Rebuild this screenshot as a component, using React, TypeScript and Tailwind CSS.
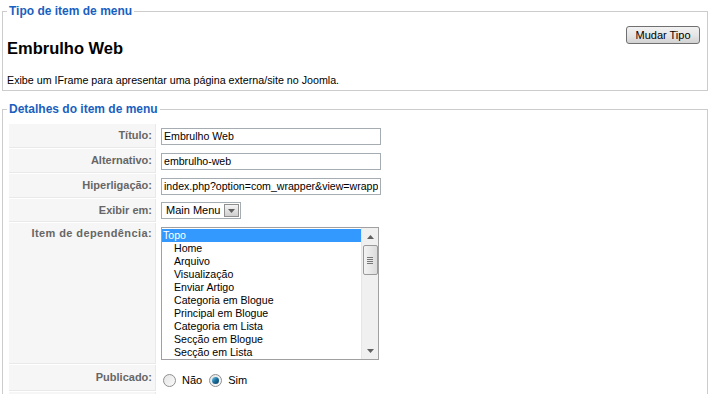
import React from "react"

const parents = [
  "Topo",
  "Home",
  "Arquivo",
  "Visualização",
  "Enviar Artigo",
  "Categoria em Blogue",
  "Principal em Blogue",
  "Categoria em Lista",
  "Secção em Blogue",
  "Secção em Lista",
]

const Label: React.FC<{ text: string; top?: boolean; extra?: string }> = ({ text, top, extra }) => (
  <div
    className={
      "w-[147px] shrink-0 bg-[#f6f6f6] border-b border-r border-[#e9e9e9] pr-[3px] text-right text-[11px] leading-[13px] font-bold text-[#666] flex justify-end " +
      (top ? "items-start pt-[4px] " : "items-center ") +
      (extra || "")
    }
  >
    {text}
  </div>
)

const TextInput: React.FC<{ value: string }> = ({ value }) => (
  <input
    readOnly
    value={value}
    className="w-[220px] h-[17px] border border-[#a5acb2] bg-white px-[2px] text-[10.6px] text-black outline-none"
  />
)

const Radio: React.FC<{ checked?: boolean }> = ({ checked }) => (
  <span className="w-[13px] h-[13px] rounded-full border border-[#8e8f8f] bg-gradient-to-br from-[#e4e4e4] to-[#fbfbfb] flex items-center justify-center">
    {checked && (
      <span className="w-[7px] h-[7px] rounded-full bg-gradient-to-br from-[#6fd0f2] via-[#1b6e9e] to-[#0b3f60]" />
    )}
  </span>
)

const Arrow: React.FC<{ down?: boolean }> = ({ down }) => (
  <svg width="7" height="4" viewBox="0 0 7 4">
    {down ? (
      <path d="M0 0 H7 L3.5 4 Z" fill="#606060" />
    ) : (
      <path d="M0 4 H7 L3.5 0 Z" fill="#606060" />
    )}
  </svg>
)

const ListBox = () => (
  <div className="w-[218px] h-[133px] border border-[#a0a0a0] bg-white flex">
    <div className="flex-1 overflow-hidden pt-[1px]">
      {parents.map((p, i) => (
        <div
          key={p}
          className={
            "h-[13px] text-[10.6px] leading-[13px] whitespace-nowrap " +
            (i === 0 ? "bg-[#3399ff] text-white pl-[1px]" : "text-black pl-[12px]")
          }
        >
          {p}
        </div>
      ))}
    </div>
    <div className="w-[17px] bg-[#f0f0f0] border-l border-[#e6e6e6] flex flex-col items-center">
      <div className="h-[17px] flex items-center justify-center">
        <Arrow />
      </div>
      <div className="w-[15px] h-[30px] rounded-[2px] border border-[#9a9a9a] bg-gradient-to-r from-[#f3f3f3] to-[#dcdcdc] flex flex-col items-center justify-center gap-[1px]">
        <span className="w-[6px] h-[1px] bg-[#777]" />
        <span className="w-[6px] h-[1px] bg-[#777]" />
        <span className="w-[6px] h-[1px] bg-[#777]" />
        <span className="w-[6px] h-[1px] bg-[#777]" />
      </div>
      <div className="flex-1" />
      <div className="h-[17px] flex items-center justify-center">
        <Arrow down />
      </div>
    </div>
  </div>
)

const Select: React.FC<{ text: string; w: string }> = ({ text, w }) => (
  <div className={w + " h-[17px] border border-[#a5acb2] bg-white flex items-center justify-between"}>
    <span className="pl-[4px] text-[11px] text-black whitespace-nowrap">{text}</span>
    <span className="w-[15px] h-[13px] mr-[1px] border border-[#8f8f8f] bg-gradient-to-b from-[#f4f4f4] to-[#cfcfcf] flex items-center justify-center">
      <Arrow down />
    </span>
  </div>
)

export default function App() {
  return (
    <div className="h-[394px] bg-white font-['Liberation_Sans',Arial,Helvetica,sans-serif] text-black overflow-hidden">
      <fieldset className="mt-[4px] ml-[2px] mr-[3px] border border-[#cccccc] px-[4px] pb-[3px]">
        <legend className="px-[2px] text-[12px] leading-[14px] font-bold text-[#1a5fc0]">
          Tipo de item de menu
        </legend>
        <div className="flex justify-between items-start">
          <div>
            <h2 className="mt-[21px] text-[16.5px] leading-[18px] font-bold">Embrulho Web</h2>
            <p className="mt-[17px] text-[10.7px] leading-[13px]">
              Exibe um IFrame para apresentar uma página externa/site no Joomla.
            </p>
          </div>
          <button className="mt-[8px] mr-[3px] w-[74px] h-[18px] rounded-[3px] border border-[#707070] bg-gradient-to-b from-[#f2f2f2] via-[#e6e6e6] to-[#d2d2d2] text-[11px] leading-[14px] text-black">
            Mudar Tipo
          </button>
        </div>
      </fieldset>

      <fieldset className="mt-[11px] ml-[2px] mr-[3px] border border-[#cccccc] px-[4px] pb-[10px]">
        <legend className="px-[2px] text-[12px] leading-[14px] font-bold text-[#1a5fc0]">
          Detalhes do item de menu
        </legend>
        <div className="mt-[8px] ml-[2px] flex flex-col gap-[1px]">
          <div className="flex h-[24px] gap-[1px]">
            <Label text="Título:" />
            <div className="pl-[4px] flex items-center">
              <TextInput value="Embrulho Web" />
            </div>
          </div>
          <div className="flex h-[24px] gap-[1px]">
            <Label text="Alternativo:" />
            <div className="pl-[4px] flex items-center">
              <TextInput value="embrulho-web" />
            </div>
          </div>
          <div className="flex h-[24px] gap-[1px]">
            <Label text="Hiperligação:" />
            <div className="pl-[4px] flex items-center">
              <TextInput value="index.php?option=com_wrapper&view=wrapper" />
            </div>
          </div>
          <div className="flex h-[23px] gap-[1px]">
            <Label text="Exibir em:" />
            <div className="pl-[4px] flex items-center">
              <Select text="Main Menu" w="w-[80px]" />
            </div>
          </div>
          <div className="flex h-[141px] gap-[1px]">
            <Label text="Item de dependência:" top extra="tracking-[0.4px]" />
            <div className="pl-[4px] pt-[4px]">
              <ListBox />
            </div>
          </div>
          <div className="flex h-[26px] gap-[1px]">
            <Label text="Publicado:" />
            <div className="pl-[6px] pt-[4px] flex items-center text-[11px]">
              <Radio />
              <span className="ml-[6px] mr-[7px]">Não</span>
              <Radio checked />
              <span className="ml-[6px]">Sim</span>
            </div>
          </div>
          <div className="flex h-[24px] gap-[1px]">
            <div className="w-[147px] shrink-0 bg-[#f6f6f6] border-b border-r border-[#e9e9e9]" />
          </div>
        </div>
      </fieldset>
    </div>
  )
}
